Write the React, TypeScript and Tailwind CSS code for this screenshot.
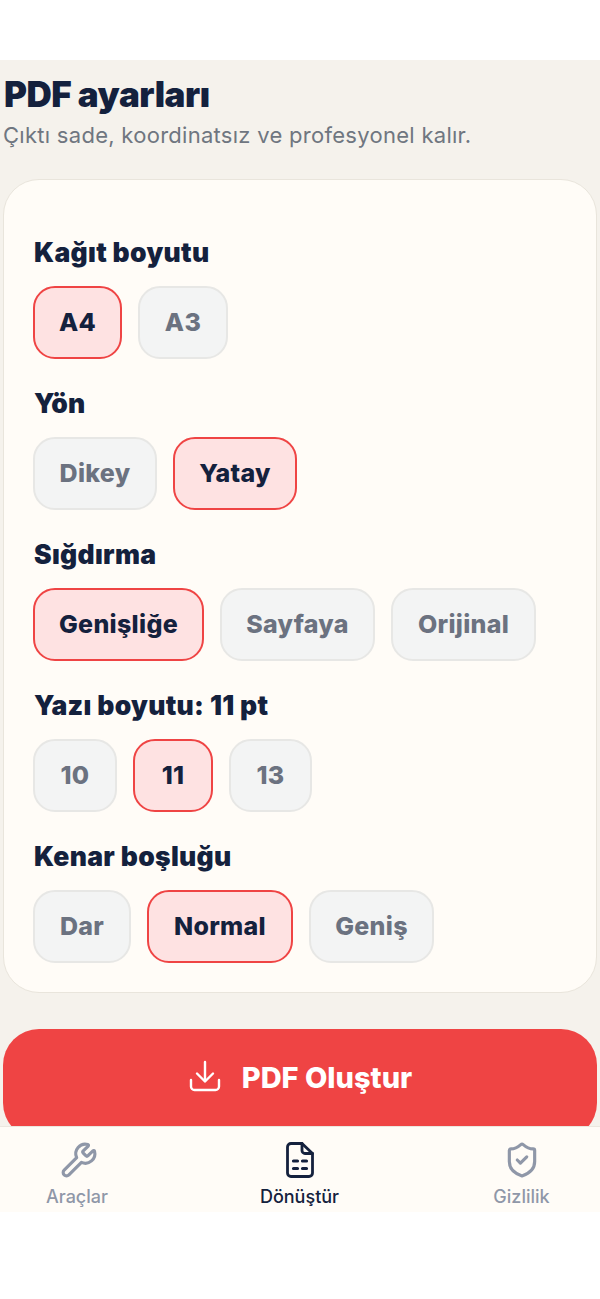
import React from 'react';
import { ShieldCheck, Wrench } from 'lucide-react';

type Group = { label: string; options: { text: string; width: string; active?: boolean }[] };

const groups: Group[] = [
  {
    label: 'Kağıt boyutu',
    options: [
      { text: 'A4', width: 'w-[89px]', active: true },
      { text: 'A3', width: 'w-[90px]' },
    ],
  },
  {
    label: 'Yön',
    options: [
      { text: 'Dikey', width: 'w-[124px]' },
      { text: 'Yatay', width: 'w-[124px]', active: true },
    ],
  },
  {
    label: 'Sığdırma',
    options: [
      { text: 'Genişliğe', width: 'w-[171px]', active: true },
      { text: 'Sayfaya', width: 'w-[155px]' },
      { text: 'Orijinal', width: 'w-[145px]' },
    ],
  },
  {
    label: 'Yazı boyutu: 11 pt',
    options: [
      { text: '10', width: 'w-[84px]' },
      { text: '11', width: 'w-[80px]', active: true },
      { text: '13', width: 'w-[83px]' },
    ],
  },
  {
    label: 'Kenar boşluğu',
    options: [
      { text: 'Dar', width: 'w-[98px]' },
      { text: 'Normal', width: 'w-[146px]', active: true },
      { text: 'Geniş', width: 'w-[125px]' },
    ],
  },
];

const DownloadIcon = () => (
  <svg width="34" height="34" viewBox="0 0 34 34" fill="none" stroke="currentColor" strokeWidth="2.4" strokeLinecap="round" strokeLinejoin="round">
    <path d="M17 3v19" />
    <path d="M9 14.5l8 8 8-8" />
    <path d="M3 21v6.5a3.5 3.5 0 0 0 3.5 3.5h21a3.5 3.5 0 0 0 3.5-3.5V21" />
  </svg>
);

const FileIcon = () => (
  <svg width="38" height="38" viewBox="0 0 38 38" fill="none" stroke="currentColor" strokeWidth="2.8" strokeLinecap="round" strokeLinejoin="round">
    <path d="M21 2.5H10a3.5 3.5 0 0 0-3.5 3.5v26a3.5 3.5 0 0 0 3.5 3.5h18a3.5 3.5 0 0 0 3.5-3.5V12.5z" />
    <path d="M21 2.5V9.5a3 3 0 0 0 3 3h7.5" />
    <path strokeWidth="3.2" d="M12.5 20h4M21.5 20h4M12.5 27.5h4M21.5 27.5h4" />
  </svg>
);

const tabs = [
  { label: 'Araçlar', icon: <Wrench size={38} strokeWidth={2} className="ml-[3px]" /> },
  { label: 'Dönüştür', icon: <FileIcon />, active: true },
  { label: 'Gizlilik', icon: <ShieldCheck size={38} strokeWidth={2} /> },
];

export default function App() {
  return (
    <div className="min-h-[1299px] bg-white font-['Inter',sans-serif]">
      <div className="h-[60px]" />
      <main className="h-[1066px] overflow-hidden bg-[#f5f2ec] px-[3px] pt-[10px]">
        <h1 className="pl-px text-[35px] leading-[48px] font-black tracking-[-0.45px] text-[#14213d]">PDF ayarları</h1>
        <p className="mt-[2px] text-[22px] leading-[30px] tracking-[0.28px] text-[#6f7680]">Çıktı sade, koordinatsız ve profesyonel kalır.</p>

        <section className="mt-[29px] flex h-[814px] flex-col gap-[27px] rounded-[36px] border border-[#e9e5dc] bg-[#fffcf7] px-[29px] pt-[55px]">
          {groups.map((group) => (
            <div key={group.label}>
              <h2 className="pl-px text-[26.5px] leading-[35px] font-black tracking-[0.3px] text-[#14213d]">{group.label}</h2>
              <div className="mt-[16px] flex gap-[16px]">
                {group.options.map((option) => (
                  <div
                    key={option.text}
                    className={`flex h-[73px] items-center justify-center rounded-[22px] border-2 text-[25px] font-extrabold tracking-[0.3px] ${option.width} ${
                      option.active
                        ? 'border-[#ef4444] bg-[#fee2e2] text-[#14213d]'
                        : 'border-[#e7e7e5] bg-[#f3f4f4] text-[#6b7280]'
                    }`}
                  >
                    {option.text}
                  </div>
                ))}
              </div>
            </div>
          ))}
        </section>

        <button className="mt-[36px] flex h-[110px] w-full items-start justify-center gap-[20px] rounded-[36px] bg-[#ef4444] pt-[30px] text-white">
          <DownloadIcon />
          <span className="text-[29px] leading-[38px] font-extrabold">PDF Oluştur</span>
        </button>
      </main>

      <nav className="grid h-[86px] grid-cols-[154px_291px_153px] border-t border-[#ebe7df] bg-[#fffcf7]">
        {tabs.map(({ label, icon, active }) => (
          <div key={label} className={`flex flex-col items-center pt-[14px] ${active ? 'text-[#14213d]' : 'text-[#8f97a8]'}`}>
            {icon}
            <span className="mt-[6px] text-[18px] leading-[24px] font-medium">{label}</span>
          </div>
        ))}
      </nav>
    </div>
  );
}
